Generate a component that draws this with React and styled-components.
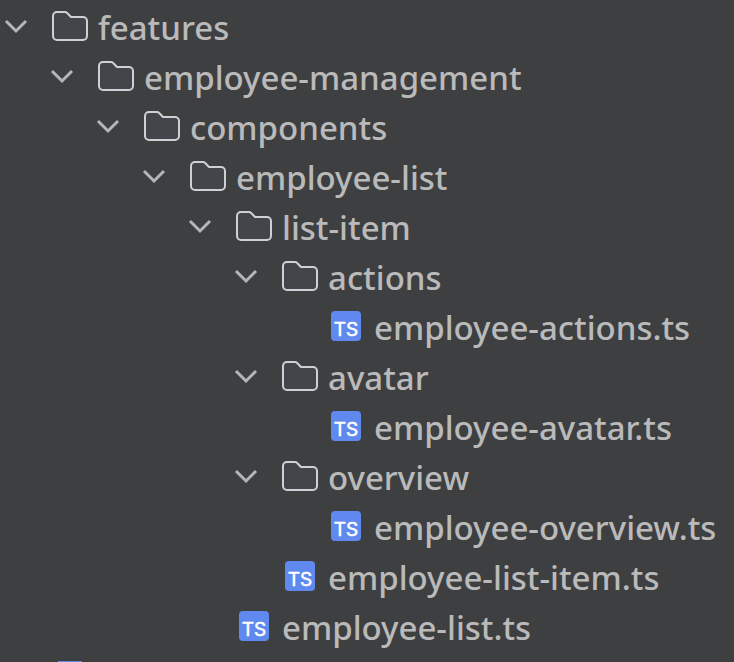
import React, { useState } from "react";
import styled, { createGlobalStyle } from "styled-components";

const GlobalStyle = createGlobalStyle`
  body {
    margin: 0;
    background: #3e3f41;
    overflow-x: hidden;
  }
`;

const Panel = styled.nav`
  padding-top: 3px;
  background: #3e3f41;
  color: #bababa;
  font-family: "Noto Sans", "Open Sans", sans-serif;
  font-size: 33px;
  font-weight: 500;
  line-height: 50px;
`;

const Branch = styled.ul`
  list-style: none;
  margin: 0;
  padding: 0 0 0 ${(props) => (props.$nested ? "46px" : "0")};
`;

const Row = styled.button`
  display: flex;
  align-items: center;
  width: 100%;
  height: 50px;
  padding: 0 0 0 ${(props) => (props.$leaf ? "52px" : "4px")};
  border: none;
  background: none;
  color: inherit;
  font: inherit;
  text-align: left;
  white-space: nowrap;
  cursor: pointer;
`;

const Chevron = styled.svg`
  flex: none;
  width: 24px;
  height: 24px;
  margin: 0 24px 4px 0;
  transform: ${(props) => (props.$open ? "none" : "rotate(-90deg)")};
`;

const Icon = styled.svg`
  flex: none;
  width: 36px;
  height: 32px;
  margin: 0 10px 4px 0;
`;

const NextPane = styled.div`
  height: 20px;
  margin-top: 8px;
  padding-left: 58px;
  background: #453a3e;
`;

const NextPaneMark = styled.div`
  width: 24px;
  height: 20px;
  background: #6089e8;
`;

const tree = [
  {
    name: "features",
    children: [
      {
        name: "employee-management",
        children: [
          {
            name: "components",
            children: [
              {
                name: "employee-list",
                children: [
                  {
                    name: "list-item",
                    children: [
                      { name: "actions", children: [{ name: "employee-actions.ts" }] },
                      { name: "avatar", children: [{ name: "employee-avatar.ts" }] },
                      { name: "overview", children: [{ name: "employee-overview.ts" }] },
                      { name: "employee-list-item.ts" },
                    ],
                  },
                  { name: "employee-list.ts" },
                ],
              },
            ],
          },
        ],
      },
    ],
  },
];

const FolderIcon = () => (
  <Icon viewBox="0 0 36 32" aria-hidden="true">
    <path
      d="M1 6a4 4 0 0 1 4-4h8a3 3 0 0 1 2.2 1L19 7h12a4 4 0 0 1 4 4v15a4 4 0 0 1-4 4H5a4 4 0 0 1-4-4z"
      fill="#43454a"
      stroke="#ced0d6"
      strokeWidth="2"
      strokeLinejoin="round"
    />
  </Icon>
);

const TsIcon = () => (
  <Icon viewBox="0 0 36 32" aria-hidden="true">
    <rect x="3" y="1" width="30" height="30" rx="4" fill="#6089f0" />
    <text
      x="18"
      y="26"
      fill="#fff"
      stroke="#fff"
      strokeWidth="0.5"
      fontFamily="Inter, sans-serif"
      fontSize="19"
      fontWeight="400"
      textAnchor="middle"
    >
      TS
    </text>
  </Icon>
);

const TreeItem = ({ item }) => {
  const [open, setOpen] = useState(true);

  if (!item.children) {
    return (
      <li>
        <Row type="button" $leaf>
          <TsIcon />
          {item.name}
        </Row>
      </li>
    );
  }

  return (
    <li>
      <Row type="button" aria-expanded={open} onClick={() => setOpen(!open)}>
        <Chevron viewBox="0 0 24 24" $open={open} aria-hidden="true">
          <path d="M2 7l10 10L22 7" fill="none" stroke="#b4b6ba" strokeWidth="3" />
        </Chevron>
        <FolderIcon />
        {item.name}
      </Row>
      {open && (
        <Branch $nested>
          {item.children.map((child) => (
            <TreeItem key={child.name} item={child} />
          ))}
        </Branch>
      )}
    </li>
  );
};

const App = () => (
  <>
    <GlobalStyle />
    <Panel aria-label="Project files">
      <Branch>
        {tree.map((item) => (
          <TreeItem key={item.name} item={item} />
        ))}
      </Branch>
    </Panel>
    <NextPane>
      <NextPaneMark />
    </NextPane>
  </>
);

export default App;
